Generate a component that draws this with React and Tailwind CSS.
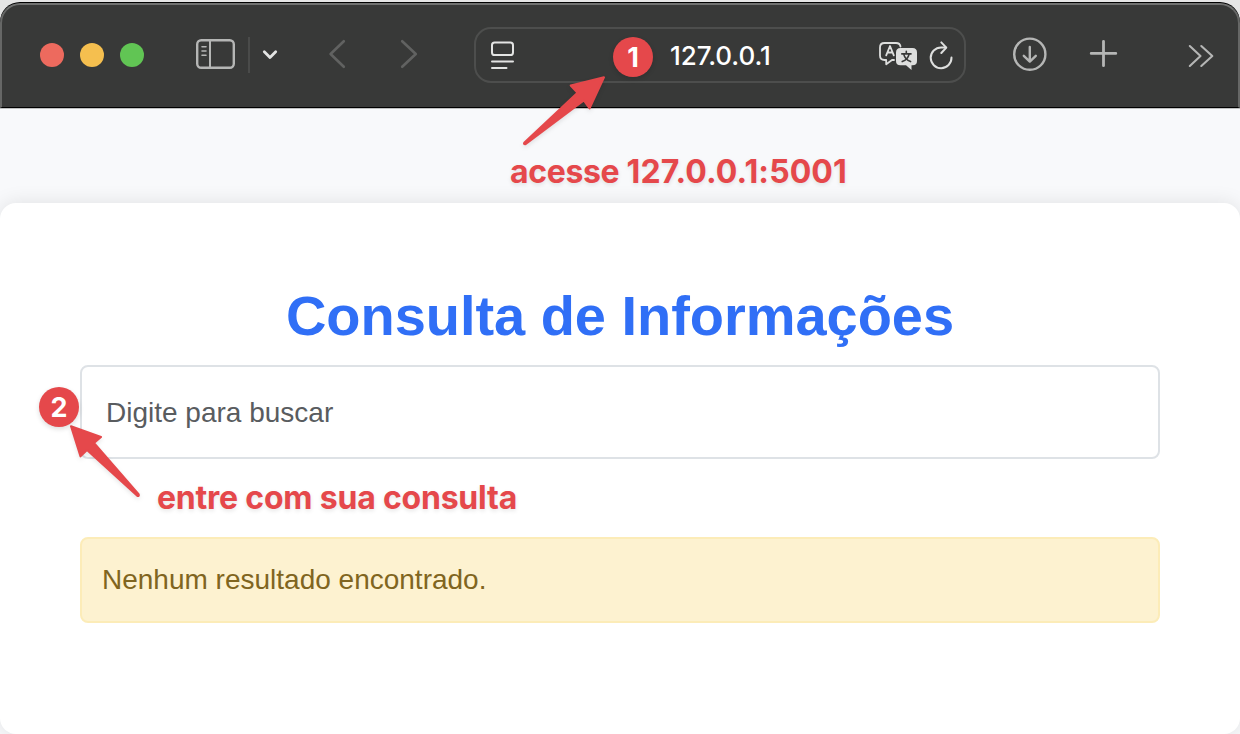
function Icon({ viewBox, className, children }) {
  return (
    <svg
      viewBox={viewBox}
      className={`h-[60px] shrink-0 ${className}`}
      fill="none"
      stroke="currentColor"
      strokeLinecap="round"
      strokeLinejoin="round"
    >
      {children}
    </svg>
  );
}

function WindowControls() {
  return (
    <div className="ml-[38px] mt-[2px] flex gap-4">
      <span className="size-6 rounded-full bg-[#ed6a5e]" />
      <span className="size-6 rounded-full bg-[#f5bf4f]" />
      <span className="size-6 rounded-full bg-[#61c554]" />
    </div>
  );
}

function AddressBar() {
  return (
    <div className="ml-[44px] mt-[2px] flex h-[56px] w-[492px] items-center rounded-[17px] border-2 border-[#4d4e4d]">
      <Icon viewBox="486 25 32 60" className="ml-[10px] w-8 text-[#e3e4e3]">
        <rect x="492" y="42.6" width="21" height="12.4" rx="2.6" strokeWidth="2" />
        <path d="M492 61.5H513M492 68H506.5" strokeWidth="2" />
      </Icon>
      <span className="ml-[152px] mt-[2px] w-[110px] whitespace-nowrap font-['Inter','Liberation_Sans',sans-serif] text-[26px] font-medium leading-8 tracking-[-0.08px] text-white">
        127.0.0.1
      </span>
      <Icon viewBox="874 25 48 60" className="ml-[94px] w-12 text-[#dedfde]">
        <path
          d="M894 60H892L886.2 64.2V60H884.5Q880 60 880 55.5V47.5Q880 43 884.5 43H896Q900 43 900.5 46.5"
          strokeWidth="1.8"
        />
        <path d="M886.2 55.4L890 46L893.8 55.4M887.5 52.5H892.5" strokeWidth="1.8" />
        <path
          d="M900.5 48H912.5Q917 48 917 52.5V61Q917 65.3 912.5 65.3H911.5V70L906 65.3H900.5Q896 65.3 896 61V52.5Q896 48 900.5 48Z"
          fill="currentColor"
          stroke="none"
        />
        <path
          d="M906.3 51.2V53.4M901.8 53.9H911M909 54.4Q908 59.6 902.2 61.6M903.8 54.4Q905 59.6 910.6 61.6"
          stroke="#383938"
          strokeWidth="1.6"
        />
      </Icon>
      <Icon viewBox="924 25 34 60" className="ml-[2px] w-[34px] text-[#dedfde]">
        <path d="M951.5 57.6A10.4 10.4 0 1 1 941.1 47.4H945.8" strokeWidth="2" />
        <path d="M941.3 42.4L946.3 47.6L941.3 53" strokeWidth="2" />
      </Icon>
    </div>
  );
}

function BrowserToolbar() {
  return (
    <header className="flex h-[105px] shrink-0 items-center rounded-t-[20px] border-x-2 border-t-2 border-b border-x-[#666766] border-t-[#707170] border-b-black bg-[#383938] pb-1 shadow-[0_-1px_0_#000]">
      <WindowControls />
      <Icon viewBox="190 24 52 60" className="ml-[46px] w-[52px] text-[#b5b6b5]">
        <rect x="197.2" y="40.2" width="36.6" height="27.6" rx="4" strokeWidth="2.4" />
        <path d="M210 41V67" strokeWidth="2" />
        <path d="M202 46.7H206M202 51H206M202 55.3H206" strokeWidth="1.6" />
      </Icon>
      <span className="ml-[6px] mt-[2px] h-9 w-[2px] bg-[#4a4b4a]" />
      <Icon viewBox="256 24 28 60" className="ml-[6px] w-7 text-[#e3e4e3]">
        <path d="M264.3 51.8L270 57.6L275.7 51.8" strokeWidth="2.8" />
      </Icon>
      <Icon viewBox="322 24 30 60" className="ml-[38px] w-[30px] text-[#616261]">
        <path d="M343.8 41.2L330.6 54L343.8 66.8" strokeWidth="2.6" />
      </Icon>
      <Icon viewBox="394 24 30 60" className="ml-[42px] w-[30px] text-[#616261]">
        <path d="M402.2 41.2L415.8 54L402.2 66.8" strokeWidth="2.6" />
      </Icon>
      <div className="ml-[6px] flex">
        <AddressBar />
      </div>
      <Icon viewBox="1006 24 48 60" className="ml-[40px] w-12 text-[#b5b6b5]">
        <circle cx="1029.8" cy="54.2" r="15.6" strokeWidth="2.4" />
        <path d="M1029.8 47V61.3M1023.8 55.8L1029.8 61.6L1035.8 55.8" strokeWidth="2.4" />
      </Icon>
      <Icon viewBox="1082 24 42 60" className="ml-7 w-[42px] text-[#b5b6b5]">
        <path d="M1103.5 41.3V65.7M1091.2 53.4H1115.8" strokeWidth="2.8" />
      </Icon>
      <Icon viewBox="1182 24 38 60" className="ml-[58px] w-[38px] text-[#b5b6b5]">
        <path d="M1189.8 46L1200.5 56L1189.8 66M1201.3 46L1212.3 56L1201.3 66" strokeWidth="2.1" />
      </Icon>
    </header>
  );
}

function StepBadge({ number, className }) {
  return (
    <span
      className={`absolute flex size-10 items-center justify-center rounded-full bg-[#e5484b] font-['Inter','Liberation_Sans',sans-serif] text-[27px] font-bold leading-none text-white shadow-[0_2px_5px_rgba(0,0,0,0.14)] ${className}`}
    >
      {number}
    </span>
  );
}

function Annotations() {
  return (
    <div className="pointer-events-none absolute inset-0">
      <svg
        viewBox="0 0 1240 734"
        className="absolute inset-0 size-full drop-shadow-[0_2px_2px_rgba(0,0,0,0.1)]"
        fill="#e5484b"
        stroke="#e5484b"
        strokeWidth="2"
        strokeLinejoin="round"
      >
        <path d="M604 77.3L570.7 85.5L577.5 92.7L524.2 142.8Q523.4 144.6 525.8 144L583.8 100.5L589.6 108.4Z" />
        <path d="M71 426.2L80.5 456.4L87 450L137.5 496Q139.4 496.2 138.6 494.2L94 443L101 437Z" />
      </svg>
      <StepBadge number="1" className="left-[613px] top-[37px]" />
      <StepBadge number="2" className="left-[39px] top-[387px]" />
      <p className="absolute left-[510px] top-[152px] whitespace-nowrap font-['Inter','Liberation_Sans',sans-serif] text-[32px] font-bold leading-10 tracking-[-0.35px] text-[#e5484b] [text-shadow:0_2px_4px_rgba(0,0,0,0.1)]">
        acesse <span className="tracking-[0.1px]">127.0.0.1:5001</span>
      </p>
      <p className="absolute left-[157px] top-[478px] whitespace-nowrap font-['Inter','Liberation_Sans',sans-serif] text-[32px] font-bold leading-10 tracking-[-0.21px] text-[#e5484b] [text-shadow:0_2px_4px_rgba(0,0,0,0.1)]">
        entre com sua consulta
      </p>
    </div>
  );
}

export default function App() {
  return (
    <div className="relative flex h-[734px] w-[1240px] flex-col overflow-hidden bg-[#e6e6e6] pt-[2px] font-['Liberation_Sans',Arial,sans-serif]">
      <div className="flex flex-1 flex-col rounded-t-[20px] bg-[#f8f9fb] pt-px">
        <BrowserToolbar />
        <main className="flex-1 overflow-hidden border-t border-[#bfc0c1] bg-[#f8f9fb] pt-[94px]">
          <section className="flex h-[531px] flex-col rounded-[16px] bg-white px-20 pt-[80px] shadow-[0_0_20px_rgba(0,0,0,0.1)]">
            <h1 className="text-center text-[56px] font-bold leading-[66px] tracking-[-0.04px] text-[#306ff6]">
              Consulta de Informações
            </h1>
            <input
              type="text"
              placeholder="Digite para buscar"
              className="mt-4 h-[94px] w-full shrink-0 rounded-lg border-2 border-[#dee2e6] bg-white px-6 pt-[2px] text-[28px] text-[#212529] outline-none placeholder:text-[#595c5f] placeholder:opacity-100"
            />
            <div
              role="alert"
              className="mt-[78px] flex h-[86px] shrink-0 items-center rounded-lg border-2 border-[#fcecb8] bg-[#fdf2d0] px-5 text-[28px] text-[#806520]"
            >
              Nenhum resultado encontrado.
            </div>
          </section>
        </main>
      </div>
      <Annotations />
    </div>
  );
}
